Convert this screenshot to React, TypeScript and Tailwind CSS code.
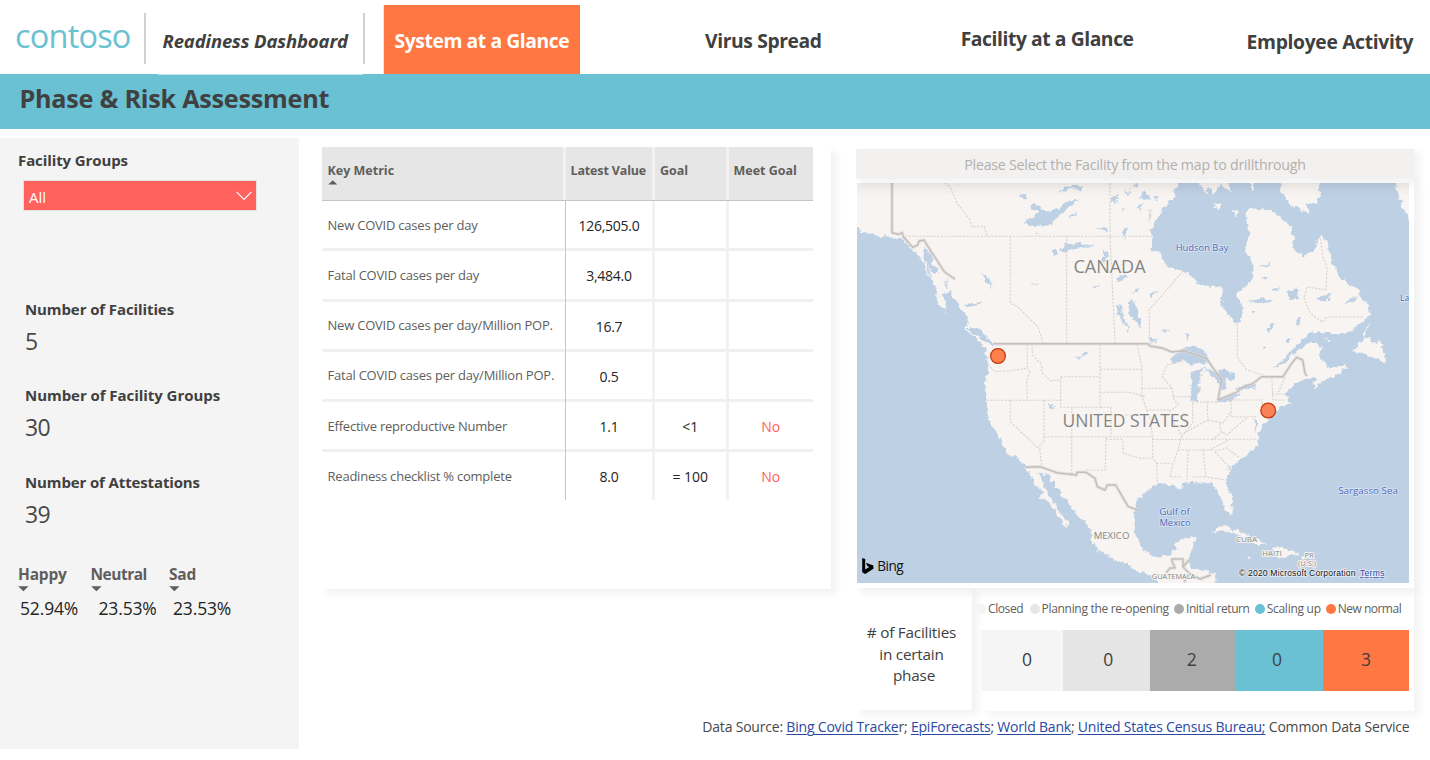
import type { ReactNode } from "react";

const tabs = [
  { label: "Virus Spread", cls: "ml-[125px] mt-[27px] tracking-[-0.38px]" },
  { label: "Facility at a Glance", cls: "ml-[139px] mt-[25px] tracking-[-0.42px]" },
  { label: "Employee Activity", cls: "ml-[113px] mt-[28px] tracking-[-0.33px]" },
];

function Header() {
  return (
    <header className="relative flex h-[74px] items-start whitespace-nowrap bg-white text-[#404040]">
      <div className="ml-[15px] mt-[16px] w-[129px] text-[32.5px] leading-[40px] tracking-[-0.8px] text-[#69c1d3]">contoso</div>
      <div className="mt-[13px] flex h-[51px] w-[221px] items-center border-x-2 border-[#d0d0d0] pl-[16.5px] pt-[5px] text-[18.5px] font-bold italic tracking-[-0.13px]">
        Readiness Dashboard
      </div>
      <div className="ml-[18px] mt-[5px] h-[69px] w-[197px] border-l border-[#e8e8e8] bg-[#ff7742] pl-[10.5px] pt-[22px] text-[19.3px] font-bold leading-[28px] tracking-[-0.4px] text-white">
        System at a Glance
      </div>
      {tabs.map((t) => (
        <div key={t.label} className={`text-[19.3px] font-bold leading-[28px] ${t.cls}`}>
          {t.label}
        </div>
      ))}
      <div className="absolute left-[158px] top-[74px] h-px w-[205px] bg-[#c4e5ed]" />
    </header>
  );
}

function Stat({ label, value, cls }: { label: string; value: string; cls: string }) {
  return (
    <div className={`h-[86.4px] pl-[25px] ${cls}`}>
      <div className="text-[15px] font-bold leading-[24px]">{label}</div>
      <div className="mt-[4px] text-[23px] leading-[32px] tracking-[-0.6px] text-[#484848]">{value}</div>
    </div>
  );
}

const moods = [
  { label: "Happy", value: "52.94%", cls: "w-[72.5px]", lab: "tracking-[-0.2px]", val: "pl-[2px]" },
  { label: "Neutral", value: "23.53%", cls: "w-[78.5px]", lab: "tracking-[-0.5px]", val: "pl-[8px]" },
  { label: "Sad", value: "23.53%", cls: "w-[80px]", lab: "tracking-[-0.2px]", val: "pl-[4px]" },
];

function Sidebar() {
  return (
    <aside className="h-[611px] w-[299px] shrink-0 whitespace-nowrap bg-[#f4f4f4] text-[#404040]">
      <h2 className="pl-[18px] pt-[10px] text-[15px] font-bold leading-[24px] tracking-[-0.1px]">Facility Groups</h2>
      <div className="ml-[23px] mt-[8px] flex h-[31px] w-[234px] items-center justify-between border border-[#e3e0df] bg-[#ff625c] pl-[5px] pr-[4px] pt-[4px] text-[15px] text-white">
        All
        <svg width="16" height="10" viewBox="0 0 16 10" className="-mt-[4px]">
          <path d="M.6 .8 8 8.4 15.4 .8" fill="none" stroke="#fff" strokeWidth="1.1" />
        </svg>
      </div>
      <div className="mt-[86px]">
        <Stat label="Number of Facilities" value="5" cls="tracking-[-0.1px]" />
        <Stat label="Number of Facility Groups" value="30" cls="tracking-[-0.05px]" />
        <Stat label="Number of Attestations" value="39" cls="tracking-[-0.13px]" />
      </div>
      <div className="mt-[6px] flex pl-[18px]">
        {moods.map((m) => (
          <div key={m.label} className={m.cls}>
            <div className={`text-[15.5px] font-bold leading-[24px] text-[#605e5c] ${m.lab}`}>{m.label}</div>
            <svg width="11" height="6" viewBox="0 0 11 6" className="block">
              <path d="M.2 .2H10.6L5.4 5.3z" fill="#605e5c" />
            </svg>
            <div className={`mt-[4px] text-[17.5px] leading-[24px] tracking-[-0.15px] text-[#252423] ${m.val}`}>{m.value}</div>
          </div>
        ))}
      </div>
    </aside>
  );
}

const rows = [
  ["New COVID cases per day", "126,505.0", "", ""],
  ["Fatal COVID cases per day", "3,484.0", "", ""],
  ["New COVID cases per day/Million POP.", "16.7", "", ""],
  ["Fatal COVID cases per day/Million POP.", "0.5", "", ""],
  ["Effective reproductive Number", "1.1", "<1", "No"],
  ["Readiness checklist % complete", "8.0", "= 100", "No"],
];

function Metrics() {
  return (
    <section className="ml-[20px] mt-[6px] h-[445px] w-[512px] shrink-0 whitespace-nowrap bg-white pl-[3px] pt-[3px] shadow-[7px_6px_7px_-1px_rgba(0,0,0,0.05)]">
      <div className="w-[491px]">
        <div className="grid h-[54px] grid-cols-[244px_89px_73.5px_84.5px] border-b border-[#c4c4c4] bg-[#e6e6e6] text-[12.5px] font-bold leading-[20px] text-[#605e5c]">
          <div className="border-r-[3px] border-[#f3f2f1] pl-[5.5px] pt-[14px]">
            <div>Key Metric</div>
            <svg width="10" height="5" viewBox="0 0 10 5" className="-mt-px block">
              <path d="M.3 4.6H9.3L4.8 .2z" fill="#605e5c" />
            </svg>
          </div>
          <div className="border-r-[3px] border-[#f3f2f1] pl-[4.5px] pt-[14px] tracking-[-0.15px]">Latest Value</div>
          <div className="border-r-[3px] border-[#f3f2f1] pl-[5px] pt-[14px]">Goal</div>
          <div className="pl-[5px] pt-[14px]">Meet Goal</div>
        </div>
        {rows.map((r, i) => (
          <div
            key={r[0]}
            className={`grid grid-cols-[244px_89px_73.5px_84.5px] text-[14px] tracking-[-0.25px] text-[#252423] ${
              i === 5 ? "h-[48px]" : "h-[50.3px] border-b-[3px] border-[#f1f0ef]"
            }`}
          >
            <div
              className={`border-r border-[#c8c6c4] pl-[5.5px] pt-[12.6px] text-[13px] leading-[22px] tracking-[-0.22px] text-[#605e5c] ${
                i < 5 ? "-mb-[3px]" : ""
              }`}
            >
              {r[0]}
            </div>
            {[r[1], r[2], r[3]].map((v, c) => (
              <div
                key={c}
                className={`pt-[14px] text-center leading-[22px] ${c < 2 ? "border-r-[3px] border-[#f3f2f1]" : ""} ${
                  c === 1 ? "tracking-normal" : ""
                } ${c === 2 ? "tracking-normal text-[#ff625c]" : ""}`}
              >
                {v}
              </div>
            ))}
          </div>
        ))}
      </div>
    </section>
  );
}

const WATER = [
  "M857 226L861 229 860 233 870 233.3 878 236 893 236.7 903 240 911.7 247.3 916.7 255 924 265 928.3 275 933.3 283.3 937.3 291 936 298 941 303 946.7 314 944 302 942 296 950 291.7 955 300 965 313.3 968.3 323.3 964 330 975 336.7 983.3 346.7 986.7 350 984.5 352 988.3 360 987.7 373.3 985 390 986.7 400 987.3 415 991.7 425 996.7 433.3 1001.7 443.3 1006.7 453.3 1016.7 456.7 1025 465 1030 475 1035 485 1043 493 1039 498 1050 503.3 1056.7 515 1066.7 527.3 1068.3 523.3 1060 513.3 1050 496.7 1043.3 483.3 1039.3 474 1038.3 471 1043.3 475 1048.3 474 1053.3 483.3 1061.7 495 1070 505 1080 516.7 1091.7 531.7 1090.7 543.3 1100 551.7 1116.7 560 1130 566.7 1140 572 1150 575 1160 584V592H848V226z",
  "M1180 176L1173 198 1163 208 1156.7 220 1151.7 230V250L1160 251.7 1166 267.3 1183.3 270.7 1196.7 281.7 1208.3 286.7H1221.7V306.7L1230 316.7 1236 324.3 1240.7 321.7 1242.7 308.3 1237.3 296.7 1238.3 291.7 1250 283.3 1254 275 1253.3 265 1245 251.7 1247.3 240 1249.3 233.3 1246.7 225V211.7L1250.7 207.3 1261.7 210 1271.7 208.3 1280 218.3 1291.7 226.7 1293.3 246.7 1303.3 258.3 1315 248.3 1320 233.3 1326.7 243.3 1330 255 1335 268.3 1340 278.3 1356.7 288.3 1363.3 300 1369.3 306.7V316.7L1356.7 326.7 1346.7 333.3 1323.3 332.7 1310 333.3 1300 343.3 1290 353 1273.3 368.3 1286.7 361.7 1300 347.5 1311.7 342.7 1321.7 346.7 1320 356.7 1326.7 366.7 1336.7 368.3 1345 365 1346.7 368.3 1333.3 376.7 1323.3 380 1316.7 387.7 1312.3 383.3 1316.7 376.7 1306.7 378.3 1293.3 385 1286 391.7 1286.7 398.3 1290.7 403.3 1280 406.7 1273 415 1266.7 420 1260 430 1256.7 436.7 1258.3 445 1250 451.7 1240 460 1230 468.3 1226 476.7 1226.7 486.7 1232.7 500V513.3L1230 515 1223.3 505 1219.3 493.3 1213.3 483.3H1205L1191.7 481.7 1183.3 482.7 1182.7 488.3 1170 485 1156.7 484 1146.7 490 1137.3 500 1134 513.3 1135 533.3 1143.3 550 1153.3 556.7 1166.7 556 1175 550 1176.7 541.7 1186.7 538.3H1195.7L1192.7 546.7 1188.3 560 1190 568.3 1206.7 570 1216 575 1215 584V592H1420V176z",
  // Great Lakes
  "M1169 361L1180 351 1191.7 345 1206.7 353.3 1209.3 364.5 1196.7 362.7 1190 365 1184 359 1174 363z",
  "M1192 373L1198 369 1207 368 1199 377 1199.8 390 1196.7 401.7 1191.5 400 1190.7 386.7z",
  "M1205 369.3L1216.7 371.7 1225 367 1229 372 1235 375 1235 380 1226.7 380 1225.5 390 1220.7 390 1217.3 381.7 1210 375z",
  "M1216 402L1226.7 396.7 1241 392 1235 398 1220 404.5z",
  "M1236 390L1245 384.3 1257 382.5 1251.7 388.8 1238 391z",
  // Chesapeake Bay
  "M1254.5 419L1257 421 1257 432 1255 428z",
  // Northern lakes
  "M1023.3 223.3L1031.7 218 1040 213.3 1030 205 1033 203 1046.7 211.7 1056.7 208.3 1066.7 201.7 1080 199 1070 206.7 1056.7 218.3 1050 225 1036.7 227.3z",
  "M1018 195L1024 194 1028 200 1020 198zM1056 191L1068 186 1083 186 1080 193 1076 188 1064 190zM1067 215L1078 213 1070 218z",
  "M1060 250.7L1068.3 241.7 1078 244 1097 245 1080 248 1063 252zM1052 250L1057 249 1057 254 1053 254z",
  "M1127.5 301L1134 300 1139.3 313.3 1142 329 1138 325 1133 320 1129 311zM1116 305L1122 306 1123 318 1131 333 1128 330 1119 316z",
  "M1111 197L1118 194 1116 204 1111 203zM1124 188L1128 193 1132 186 1128 198zM1122 231L1128 227 1124 240zM1103 248L1108 255 1104 262zM1097 228L1106 226 1108 234 1102 230z",
  "M982 270L988 278 993 289 986 281zM1030 283L1040 285 1035 286zM963 304L983 302 978 305 966 307zM1092 286L1098 285 1094 290zM1072 278L1075 284z",
  "M1116 280L1123 274 1127 277 1119 283zM1121 263L1127 260 1123 268zM1130 219L1133 224zM1018 232L1025 230zM1035 232L1041 234 1036 235zM1100 259L1104 258 1104 265z",
  "M1260 268L1272 261 1268 267zM1262 277L1269 277 1266 280zM1248 301L1262 298 1275 301 1260 304zM1272 290L1282 285 1276 291zM1287 291L1299 289 1298 299 1290 300zM1316 297L1330 293 1329 300 1320 301zM1344 304L1360 294 1352 302z",
  "M1268 325L1275 323 1268 334zM1295 320L1301 316 1299 327zM1252 311L1257 311 1253 315zM1160 329L1170 330 1164 334zM1185 333L1190 334 1187 341zM1149 336L1157 340 1150 344zM1131 292L1139 288 1136 293zM1150 293L1158 291 1152 296z",
  "M1075 358L1088 352 1087 356zM1048 402L1052 404 1055 410 1051 408zM1262 347L1268 346 1264 350zM1285 340L1292 338 1289 343z",
  "M1144 190L1150 200 1140 198zM1138 206L1143 203 1141 212zM1149 215L1152 208 1150 222zM1136 218L1140 225zM1134 233L1141 240zM1133 185L1140 184 1137 188zM1154 195L1160 197 1156 201zM1120 208L1124 207 1122 212z",
  "M924 248L932 255 933 265 938 272 930 276 925 262zM946 278L949 290 944 288zM953 301L961 314 960 306zM965 328L978 328 990 340 993 346 987 343z",
];

const LAND = [
  "M1276.7 176L1283.3 196.7 1293.3 206.7 1311.7 214 1305 202 1316.7 203 1320 190 1319 176z",
  "M1393 176L1398 195 1402 207 1410 220H1420V176z",
  "M1194 176L1202 188 1206 194 1209 186 1213 195 1220 184 1232 194 1226 176zM1213 207L1223 201 1219 210zM1233 210L1237 209 1236 218zM1246 176L1253 192 1256 176zM1295 181L1306 186 1316 192 1308 182z",
  "M1370 321L1363 340 1352 352 1363 353 1376 358 1386 363 1387 354 1380 347 1384 343 1372 341 1362 336z",
  "M1323 338L1335 342 1329 342z",
  "M1210 533.3L1215 528.3 1226.7 526.7 1243.3 533.3 1266.7 543.3 1258.3 545 1245 538.3 1230 531 1220 530.5z",
  "M1264 554L1275 554 1273 548 1281.7 546.7 1299.3 553.3 1290 556 1283.3 558.3 1273 556zM1243 556L1253 556.5 1249 558.5zM1302 555L1313 555 1311 558 1302 558z",
  "M937 299L942 300 944 308 940 306zM927 262L931 270 935 282 930 273zM941 282L947 288 942 290z",
];

const STATES =
  "M945 183L950 187 957 203 970 220 972 227 984 226 987 236M905 236.3H1152M1010.3 236V303L1018 307 1038 327 1043 343M1066.7 236V343M1110 183V236L1115 343M1183 271L1149.3 310V340M1237.3 324V357L1246.7 370 1263 375M1320 235L1323 257 1327 267 1326 290 1307 287 1304 298 1310 313 1322 322 1327 317H1363" +
  "M990 367L995 371.7 1010 370.7 1026.7 368.3 1030 371.7 1026.7 380 1027.3 400M1027.3 344V368M986.7 400.3H1060.7M1031.7 344L1032.7 355 1041.7 365V372L1050 380.7 1060.7 380M1060.7 376.7H1100V407.3H1060.7zM1100 344V376.7M1100 369.3H1141.7M1100 392.3H1130L1146 397M1071.7 407.3V475M1100 407.3H1111V436.7M1111 415H1149M1044 436.7H1152.7M1010.3 400.3V421.7L1040 450 1041.7 466.7M1044 400.3V442L1040 444V450M1106 436.7L1105.3 470H1086M1106 439.3H1122.7L1123.3 453.3 1140 458.3H1153" +
  "M1137.3 344L1141.7 366.7 1142.3 388.3H1172.3M1183 361L1167 365 1162.3 376.7 1172.3 388.3 1173.3 398.3 1178.3 405 1170 411 1172 420 1181.7 435 1178 450 1171.7 468.3 1170 476.7H1182M1173 396.7H1191.7M1142 388L1141.7 395 1146.7 410H1170M1147 410L1150.7 420 1152.7 440V458L1156.7 463.3 1157.3 483M1152.7 439.5H1180M1156.7 463.3H1172M1192.7 403V423L1182 436M1207 401.7L1208 420 1193 428 1184 433M1192.7 402H1217M1208 420L1223 423 1231 411.7M1231 400H1261.7L1264 410M1231 400V416.7H1258M1181.7 439.3H1257.7M1178 450H1213M1210 450L1230 439.3M1188 450L1187 480M1203 450L1206 477 1226 480M1191.7 477H1206M1215 451.7L1230 468M1215 451L1226.7 448 1240 458M1220 423L1220 430 1227 435 1238 425 1246.7 418M1212 440L1222 432M1271.7 376.7L1273 400H1285M1271.7 394H1285M1285 377L1278 393";

const BORDERS =
  "M892 183V232.7L898.3 234.3 902.3 232.7 903.3 236.7 912.7 247.3 917.7 245 919 241 924 240 927 245 944.3 271.7 955 279.3M993 343.7H1148L1150 346 1163 348.3 1172 352 1183 350.7 1206.7 358.3 1213 368 1221.7 380 1218 400 1238 391.7 1240 388.5 1253 383.3 1261.7 376.7H1283L1291.7 363.3 1296.7 357.3 1302.7 360 1305 373.3 1307 376M1025 467.3L1040 466.7 1056.7 472.7 1076.7 475V472.3H1086L1095 478.3 1097.3 486.7 1105 490 1107.3 485H1115.7L1123.3 498.3 1128.3 506.7 1138 510M1166 573L1170 568 1175 568 1172 561 1172 559H1183V567L1189 560M1183 567L1190 574 1184 582M1190 574L1200 579 1211 575";

function Place({ x, y, size, children, water }: { x: number; y: number; size: number; children: ReactNode; water?: boolean }) {
  return (
    <text
      x={x}
      y={y}
      textAnchor="middle"
      fontSize={size}
      fill={water ? "#4a66b8" : "#858585"}
      stroke={water ? "#dbe6f3" : "#f8f5f2"}
      strokeWidth={water ? 1.6 : 2}
      strokeLinejoin="round"
      paintOrder="stroke"
    >
      {children}
    </text>
  );
}

function FacilityMap() {
  return (
    <svg width="552" height="400" viewBox="857 183 552 400" className="block font-['Open_Sans','Noto_Sans',sans-serif]">
      <defs>
        <filter id="coast" x="-5%" y="-5%" width="110%" height="110%" colorInterpolationFilters="sRGB">
          <feTurbulence type="fractalNoise" baseFrequency="0.17" numOctaves="3" seed="4" />
          <feDisplacementMap in="SourceGraphic" scale="7" xChannelSelector="R" yChannelSelector="G" />
          <feGaussianBlur stdDeviation="0.35" />
        </filter>
        <linearGradient id="top" x1="0" y1="0" x2="0" y2="1">
          <stop offset="0" stopColor="#000" stopOpacity="0.05" />
          <stop offset="1" stopColor="#000" stopOpacity="0" />
        </linearGradient>
      </defs>
      <rect x="857" y="183" width="552" height="400" fill="#f7f4f1" />
      <g filter="url(#coast)">
        <rect x="846" y="172" width="574" height="422" fill="#f7f4f1" />
        {WATER.map((d) => (
          <path key={d} d={d} fill="#bed0e4" />
        ))}
        {LAND.map((d) => (
          <path key={d} d={d} fill="#f7f4f1" />
        ))}
      </g>
      <path d={STATES} fill="none" stroke="#d6d2cf" strokeWidth="1.1" strokeDasharray="2.2 1.4" />
      <path d={BORDERS} fill="none" stroke="#dedad8" strokeWidth="3.6" strokeLinejoin="round" opacity="0.6" />
      <path d={BORDERS} fill="none" stroke="#c2bebd" strokeWidth="1.4" strokeLinejoin="round" />
      <Place x={1109.5} y={272.5} size={18}>CANADA</Place>
      <Place x={1125.8} y={426.5} size={17.5}>UNITED STATES</Place>
      <Place x={1111.5} y={539} size={9.6}>MEXICO</Place>
      <Place x={1246.5} y={542} size={8}>CUBA</Place>
      <Place x={1272} y={556} size={7.8}>HAITI</Place>
      <Place x={1309} y={557.5} size={7.5}>PR</Place>
      <Place x={1307} y={566} size={7.5}>(U.S.)</Place>
      <Place x={1173.5} y={579} size={7.4}>GUATEMALA</Place>
      <Place x={1202} y={251} size={9.4} water>Hudson Bay</Place>
      <Place x={1404.6} y={301} size={8.4} water>La</Place>
      <Place x={1368} y={493.7} size={9.8} water>Sargasso Sea</Place>
      <Place x={1174.5} y={515.2} size={9.8} water>Gulf of</Place>
      <Place x={1175} y={525.8} size={9.4} water>Mexico</Place>
      <rect x="857" y="183" width="552" height="14" fill="url(#top)" />
      <circle cx="998" cy="356" r="7.4" fill="#ff7f4d" stroke="#c23a0c" strokeWidth="1.2" />
      <circle cx="1268.2" cy="410.5" r="7.4" fill="#fb8157" stroke="#c23a0c" strokeWidth="1.2" />
      <path d="M862.2 558l3 1.1v10.3l4.1-2.4-2-1-1.3-3.2 7.4 2.6v3.4L865.2 574l-3-1.7z" fill="#000" />
      <text x="877.3" y="571.3" fontSize="13.6" letterSpacing="-0.5" fill="#111">Bing</text>
      <text
        x="1239"
        y="576.3"
        fontSize="8.7"
        fill="#111"
        stroke="#e8eef6"
        strokeWidth="1.6"
        paintOrder="stroke"
        fontFamily="Liberation Sans"
        textLength="116.5"
      >
        © 2020 Microsoft Corporation
      </text>
      <text
        x="1360"
        y="576.3"
        fontSize="8.7"
        fill="#2a45a0"
        stroke="#e8eef6"
        strokeWidth="1.6"
        paintOrder="stroke"
        fontFamily="Liberation Sans"
        textDecoration="underline"
        textLength="24.5"
      >
        Terms
      </text>
    </svg>
  );
}

const legend = [
  { label: "Closed", dot: "bg-[#f4f4f4]", cls: "w-[53.5px]", tr: "tracking-[-0.4px]" },
  { label: "Planning the re-opening", dot: "bg-[#e6e6e6]", cls: "w-[144.5px]", tr: "tracking-[-0.3px]" },
  { label: "Initial return", dot: "bg-[#ababab]", cls: "w-[80.7px]", tr: "tracking-[-0.42px]" },
  { label: "Scaling up", dot: "bg-[#69c1d3]", cls: "w-[71px]", tr: "tracking-[-0.27px]" },
  { label: "New normal", dot: "bg-[#ff7742]", cls: "w-[80px]", tr: "tracking-[-0.5px]" },
];

const phases = [
  { n: 0, cls: "bg-[#f5f5f5] w-[82px] pl-[10px]" },
  { n: 0, cls: "bg-[#e5e5e5] w-[86.5px] pl-[4px]" },
  { n: 2, cls: "bg-[#ababab] w-[86.5px] pr-[2px]" },
  { n: 0, cls: "bg-[#69c1d3] w-[87px] pr-[5px]" },
  { n: 3, cls: "bg-[#ff7742] w-[86px]" },
];

function PhasePanel() {
  return (
    <div className="flex h-[123px] w-[558px]">
      <div className="mt-px h-[121px] w-[116px] pt-[33px] text-center text-[15.3px] leading-[21.7px] tracking-[-0.22px] text-[#404040] shadow-[5px_4px_7px_1px_rgba(0,0,0,0.05)]">
        <div className="pr-[5px]"># of Facilities</div>
        <div className="pr-[5px]">in certain</div>
        <div>phase</div>
      </div>
      <div className="ml-[9px] w-[433px] shadow-[6px_5px_7px_0px_rgba(0,0,0,0.045)]">
        <div className="-ml-[5px] flex h-[42px] items-center whitespace-nowrap text-[12px] text-[#605e5c]">
          {legend.map((l) => (
            <div key={l.label} className={`flex shrink-0 items-center gap-[2px] ${l.cls} ${l.tr}`}>
              <span className={`size-[10px] shrink-0 rounded-full ${l.dot}`} />
              {l.label}
            </div>
          ))}
        </div>
        <div className="flex h-[61px] w-[428px] text-[17.5px] text-[#404040]">
          {phases.map((p, i) => (
            <div key={i} className={`flex h-[61px] shrink-0 items-center justify-center pb-[3px] ${p.cls}`}>
              {p.n}
            </div>
          ))}
        </div>
      </div>
    </div>
  );
}

const link = "text-[#2b48a5] underline decoration-1 underline-offset-2";

export default function App() {
  return (
    <div className="h-[760px] w-[1430px] overflow-hidden bg-white font-['Open_Sans','Noto_Sans',sans-serif]">
      <Header />
      <h1 className="h-[55px] bg-[#69c1d3] pl-[19.5px] pt-[8px] text-[25.2px] font-bold leading-[32px] tracking-[-0.25px] text-[#404040]">
        Phase &amp; Risk Assessment
      </h1>
      <main className="flex pt-[9px]">
        <Sidebar />
        <div>
          <div className="flex">
            <Metrics />
            <section className="ml-[25px] mt-[11px] w-[558px]">
              <div className="relative flex h-[30px] items-center justify-center bg-[#f2f1f0] pt-[2px] text-[14.2px] tracking-[-0.22px] text-[#b3b0ad] shadow-[5px_4px_7px_1px_rgba(0,0,0,0.05)]">
                Please Select the Facility from the map to drillthrough
              </div>
              <div className="h-[409px] pl-px pt-[4px] shadow-[6px_5px_7px_1px_rgba(0,0,0,0.05)]">
                <FacilityMap />
              </div>
              <PhasePanel />
            </section>
          </div>
          <p className="mt-[5px] w-[1110.5px] whitespace-nowrap text-right text-[14px] leading-[22px] tracking-[-0.2px] text-[#484848]">
            Data Source: <a className={link}>Bing Covid Tracke</a>r; <a className={link}>EpiForecasts</a>;{" "}
            <a className={link}>World Bank</a>; <a className={link}>United States Census Bureau;</a> Common Data Service
          </p>
        </div>
      </main>
    </div>
  );
}
